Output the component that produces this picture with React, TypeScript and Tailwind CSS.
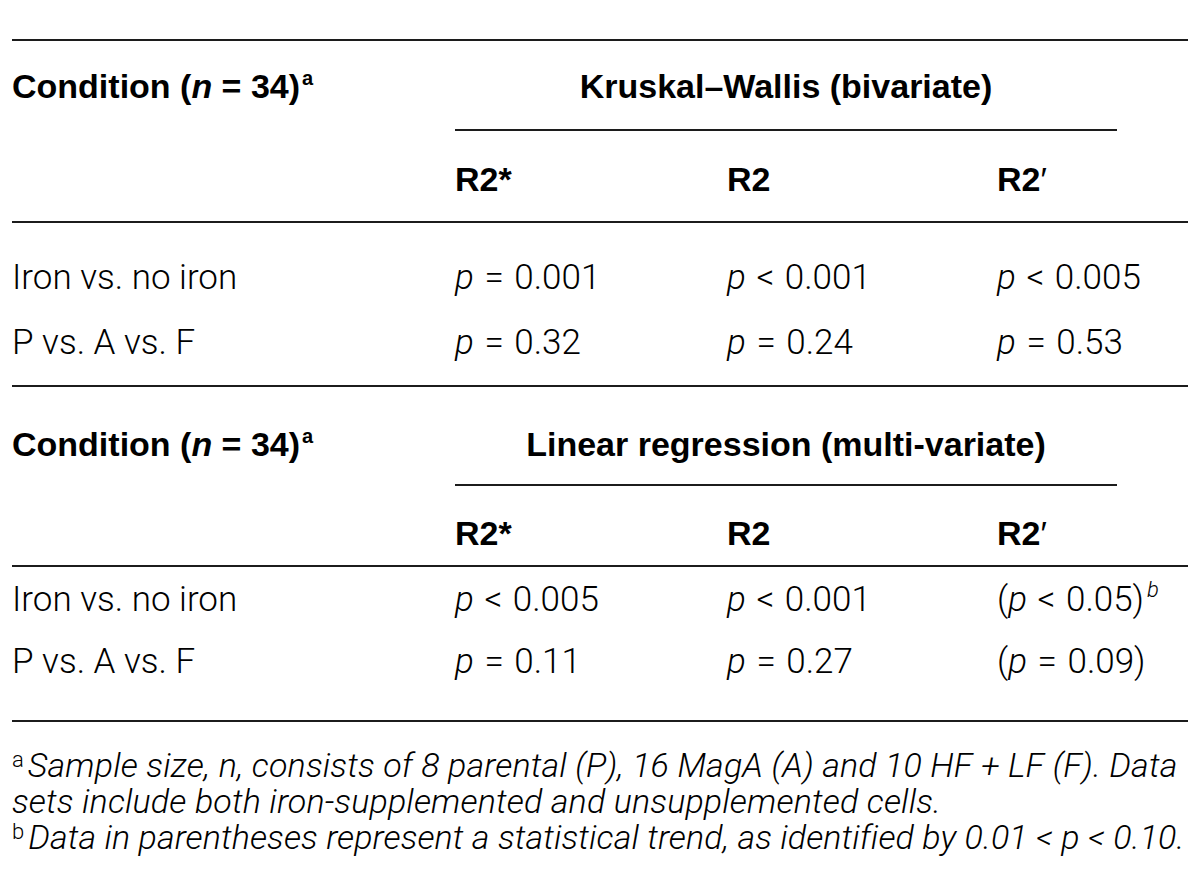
import React from 'react';

const bold = "font-['Liberation_Sans',Arial,sans-serif] font-bold text-[34px] leading-[40px] text-black";
const light = "font-['Roboto','Liberation_Sans',sans-serif] font-light text-[35px] leading-[40px] text-black";

const P = () => <span className="italic">p</span>;
// math operators sit a little wider than plain text
const Op: React.FC<{ c: string }> = ({ c }) => (
  <>
    {' '}
    <span className="mx-[2px]">{c}</span>{' '}
  </>
);

const Condition = () => (
  <span>
    Condition (<span className="italic">n</span> = 34)
    <span className="relative -top-[13px] text-[20px] leading-none ml-[2px]">a</span>
  </span>
);

const Prime = () => <span className="font-normal">′</span>;

type Row = { label: string; cells: React.ReactNode[] };

const kwRows: Row[] = [
  { label: 'Iron vs. no iron', cells: [<><P /><Op c="=" />0.001</>, <><P /><Op c="<" />0.001</>, <><P /><Op c="<" />0.005</>] },
  { label: 'P vs. A vs. F', cells: [<><P /><Op c="=" />0.32</>, <><P /><Op c="=" />0.24</>, <><P /><Op c="=" />0.53</>] },
];

const lrRows: Row[] = [
  {
    label: 'Iron vs. no iron',
    cells: [
      <><P /><Op c="<" />0.005</>,
      <><P /><Op c="<" />0.001</>,
      <>(<P /><Op c="<" />0.05)<span className="relative -top-[14px] italic text-[22px] leading-none ml-[3px]">b</span></>,
    ],
  },
  { label: 'P vs. A vs. F', cells: [<><P /><Op c="=" />0.11</>, <><P /><Op c="=" />0.27</>, <>(<P /><Op c="=" />0.09)</>] },
];

const Section: React.FC<{
  title: string;
  rows: Row[];
  headPad: string;
  subPad: string;
  bodyPad: string;
}> = ({ title, rows, headPad, subPad, bodyPad }) => (
  <div className="border-t-2 border-[#1c1c1c]">
    <div className="flex">
      <div className={`w-[443px] ${headPad} ${bold}`}>
        <Condition />
      </div>
      <div className={`w-[662px] border-b-2 border-[#1c1c1c] text-center ${headPad} ${bold}`}>{title}</div>
    </div>
    <div className={`grid grid-cols-[443px_272px_270px_1fr] border-b-2 border-[#1c1c1c] ${subPad} ${bold}`}>
      <div />
      <div>R2*</div>
      <div>R2</div>
      <div>
        R2<Prime />
      </div>
    </div>
    <div className={`flex flex-col ${bodyPad}`}>
      {rows.map(r => (
        <div key={r.label} className={`grid grid-cols-[443px_272px_270px_1fr] ${light}`}>
          <div>{r.label}</div>
          {r.cells.map((c, i) => (
            <div key={i} className="whitespace-nowrap">{c}</div>
          ))}
        </div>
      ))}
    </div>
  </div>
);

export default function App() {
  return (
    <div className="w-[1200px] h-[879px] bg-white px-[12px] pt-[39px] overflow-hidden">
      <Section
        title="Kruskal–Wallis (bivariate)"
        rows={kwRows}
        headPad="pt-[25px] pb-[23px]"
        subPad="pt-[28px] pb-[22px]"
        bodyPad="pt-[35px] pb-[22px] gap-[25px]"
      />
      <Section
        title="Linear regression (multi-variate)"
        rows={lrRows}
        headPad="pt-[37px] pb-[20px]"
        subPad="pt-[27px] pb-[12px]"
        bodyPad="pt-[13px] pb-[38px] gap-[22px]"
      />
      <div className="border-t-2 border-[#1c1c1c] pt-[25px] font-['Roboto','Liberation_Sans',sans-serif] font-light text-[34px] leading-[36px] text-black">
        <p className="whitespace-nowrap">
          <span className="relative -top-[10px] text-[22px] leading-none mr-[4px]">a</span>
          <span className="italic tracking-[0.15px]">
            Sample size, n, consists of 8 parental (P), 16 MagA (A) and 10 HF + LF (F). Data
          </span>
        </p>
        <p className="italic whitespace-nowrap tracking-[0.15px]">sets include both iron-supplemented and unsupplemented cells.</p>
        <p className="whitespace-nowrap">
          <span className="relative -top-[10px] text-[22px] leading-none mr-[4px]">b</span>
          <span className="italic tracking-[0.1px]">
            Data in parentheses represent a statistical trend, as identified by 0.01 &lt; p &lt; 0.10.
          </span>
        </p>
      </div>
    </div>
  );
}
